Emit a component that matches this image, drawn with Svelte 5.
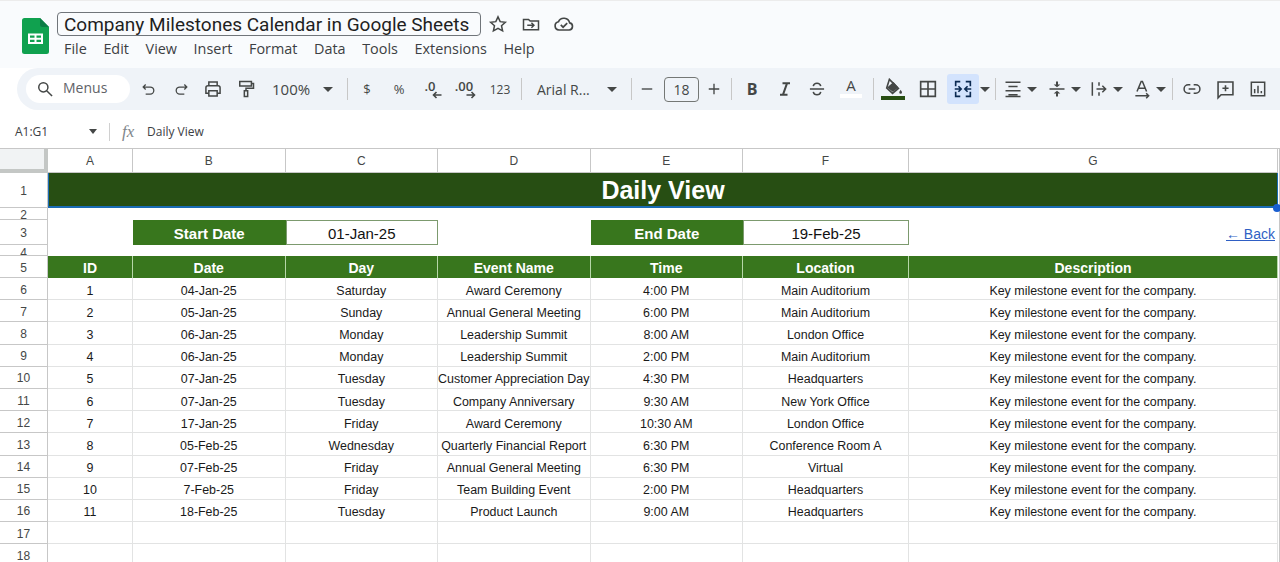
<script>
  const cols = ["A", "B", "C", "D", "E", "F", "G"];
  const menus = ["File", "Edit", "View", "Insert", "Format", "Data", "Tools", "Extensions", "Help"];
  const heads = ["ID", "Date", "Day", "Event Name", "Time", "Location", "Description"];
  const desc = "Key milestone event for the company.";

  const events = [
    [1, "04-Jan-25", "Saturday", "Award Ceremony", "4:00 PM", "Main Auditorium"],
    [2, "05-Jan-25", "Sunday", "Annual General Meeting", "6:00 PM", "Main Auditorium"],
    [3, "06-Jan-25", "Monday", "Leadership Summit", "8:00 AM", "London Office"],
    [4, "06-Jan-25", "Monday", "Leadership Summit", "2:00 PM", "Main Auditorium"],
    [5, "07-Jan-25", "Tuesday", "Customer Appreciation Day", "4:30 PM", "Headquarters"],
    [6, "07-Jan-25", "Tuesday", "Company Anniversary", "9:30 AM", "New York Office"],
    [7, "17-Jan-25", "Friday", "Award Ceremony", "10:30 AM", "London Office"],
    [8, "05-Feb-25", "Wednesday", "Quarterly Financial Report", "6:30 PM", "Conference Room A"],
    [9, "07-Feb-25", "Friday", "Annual General Meeting", "6:30 PM", "Virtual"],
    [10, "7-Feb-25", "Friday", "Team Building Event", "2:00 PM", "Headquarters"],
    [11, "18-Feb-25", "Tuesday", "Product Launch", "9:00 AM", "Headquarters"]
  ];
</script>

<div class="app">
  <header class="top">
    <svg class="logo" viewBox="0 0 27 36" width="27" height="36">
      <path d="M2.5 0H18l9 9v24.5a2.5 2.5 0 0 1-2.5 2.5h-22A2.5 2.5 0 0 1 0 33.500V2.500A2.500 2.500 0 0 1 2.500 0z" fill="#10a14f" />
      <path d="M18 0l9 9h-6.500A2.500 2.500 0 0 1 18 6.500z" fill="#0b7d45" />
      <path d="M6 15.500h15v10.500H6zM8 17.500v2.300h4.500v-2.300zM14.500 17.500v2.300H19v-2.300zM8 21.700V24h4.500v-2.300zM14.500 21.700V24H19v-2.300z" fill="#fff" fill-rule="evenodd" />
    </svg>
    <div class="titles">
      <div class="title-row">
        <div class="doc-title">Company Milestones Calendar in Google Sheets</div>
        <svg class="star" viewBox="0 0 24 24" width="20" height="20"><path d="M12 3.500l2.600 5.700 6.200.7-4.600 4.200 1.300 6.100L12 17.100l-5.500 3.100 1.300-6.100-4.600-4.200 6.200-.7z" /></svg>
        <svg class="move" viewBox="0 0 24 24" width="20" height="20"><path d="M3 6.500h6l2 2h10v10.500H3zM7.500 13.500h8M12.500 10.500l3 3-3 3" /></svg>
        <svg class="cloud" viewBox="0 0 24 24" width="22" height="22"><path d="M6.500 18.500a4.500 4.500 0 0 1-.6-8.900 6.500 6.500 0 0 1 12.300 1.200 3.900 3.900 0 0 1-.6 7.700zM8.500 13l2.500 2.500 4.500-4.500" /></svg>
      </div>
      <nav class="menus">
        {#each menus as m}<span>{m}</span>{/each}
      </nav>
    </div>
  </header>

  <div class="toolbar">
    <div class="pill">
      <svg viewBox="0 0 24 24" width="20" height="20"><circle cx="10" cy="10" r="5.500" /><path d="M14 14l6.500 6.500" /></svg>
      <span>Menus</span>
    </div>
    <div class="tool w33"><svg viewBox="0 0 24 24" width="17" height="17"><path d="M8 5L4.500 8.500 8 12M5 8.500h9.500a5 5 0 0 1 0 10H8" /></svg></div>
    <div class="tool w32"><svg viewBox="0 0 24 24" width="17" height="17"><path d="M16 5l3.500 3.500L16 12M19 8.500H9.500a5 5 0 0 0 0 10H16" /></svg></div>
    <div class="tool w32"><svg viewBox="0 0 24 24" width="20" height="20"><path d="M7 8V3.500h10V8M7 17H3.500v-6.500A2.500 2.500 0 0 1 6 8h12a2.500 2.500 0 0 1 2.500 2.500V17H17M7 14h10v6.500H7z" /></svg></div>
    <div class="tool w33"><svg viewBox="0 0 24 24" width="20" height="20"><path d="M4.500 3h14v5.500h-14zM18.500 5.500h2.500v5.500h-9v3M10 14h4v7h-4z" /></svg></div>
    <div class="tool w79 between"><span class="label big">100%</span><i class="caret"></i></div>
    <div class="sep ml6"></div>
    <div class="tool w38"><span class="label plain">$</span></div>
    <div class="tool w26"><span class="label plain">%</span></div>
    <div class="tool w40 dec">
      <span class="dec-num">.0</span>
      <svg class="dec-arrow" viewBox="0 0 10 8" width="10" height="8"><path d="M9.500 4H1.500M4.500 1L1.500 4l3 3" /></svg>
    </div>
    <div class="tool w28 dec">
      <span class="dec-num">.00</span>
      <svg class="dec-arrow" viewBox="0 0 10 8" width="10" height="8"><path d="M.5 4h8M5.500 1l3 3-3 3" /></svg>
    </div>
    <div class="tool w40"><span class="label small">123</span></div>
    <div class="sep ml1"></div>
    <div class="tool w100 between font"><span class="label">Arial R...</span><i class="caret"></i></div>
    <div class="sep ml9"></div>
    <div class="tool w30"><svg viewBox="0 0 24 24" width="18" height="18"><path d="M5 12h14" /></svg></div>
    <div class="size">18</div>
    <div class="tool w30"><svg viewBox="0 0 24 24" width="18" height="18"><path d="M5 12h14M12 5v14" /></svg></div>
    <div class="sep ml2"></div>
    <div class="tool w40"><span class="glyph b">B</span></div>
    <div class="tool w26">
      <svg viewBox="0 0 24 24" width="20" height="20"><path class="thick" d="M9 5h9M6 19h9M14.500 5L9.500 19" /></svg>
    </div>
    <div class="tool w38">
      <svg viewBox="0 0 24 24" width="20" height="20"><path d="M3.500 12h17M16.500 8.500C16 6 14.500 5 12 5S8 6 7.500 8.500M7.500 15.500C8 18 9.500 19 12 19s4-1 4.500-3.500" /></svg>
    </div>
    <div class="tool w30 color">
      <span class="glyph a">A</span>
      <i class="swatch white"></i>
    </div>
    <div class="sep ml7"></div>
    <div class="tool w38 color">
      <svg viewBox="0 0 24 20" width="22" height="18"><path class="filled" d="M5.500 10.500L12.500 4.500l5.500 6-6 5z" /><path d="M8 1.500l10 10-6.500 5.500L5 11z" /><path class="filled" d="M20.500 13c1 1.500 1.500 2.200 1.500 3a1.500 1.500 0 0 1-3 0c0-.8.500-1.500 1.500-3z" /></svg>
      <i class="swatch dark"></i>
    </div>
    <div class="tool w32"><svg viewBox="0 0 24 24" width="22" height="22"><path d="M4 4h16v16H4zM12 4v16M4 12h16" /></svg></div>
    <div class="tool merge">
      <svg viewBox="0 0 24 24" width="22" height="22"><path class="navy" d="M9 4H4v5M4 15v5h5M15 4h5v5M20 15v5h-5M3 12h6.500M7 9l3 3-3 3M21 12h-6.500M17 9l-3 3 3 3" /></svg>
    </div>
    <div class="tool w12"><i class="caret"></i></div>
    <div class="sep ml4"></div>
    <div class="tool w44 with-caret">
      <svg viewBox="0 0 24 24" width="20" height="20"><path d="M3 4h18M6.500 9h11M3 14h18M6.500 19h11M3 21h18" /></svg>
      <i class="caret"></i>
    </div>
    <div class="tool w43 with-caret">
      <svg viewBox="0 0 24 24" width="20" height="20"><path d="M3 12h18" /><path class="filled" d="M10.800 3h2.400v3.500H16L12 10 8 6.500h2.800zM10.800 21h2.400v-3.500H16L12 14l-4 3.500h2.800z" /></svg>
      <i class="caret"></i>
    </div>
    <div class="tool w42 with-caret">
      <svg viewBox="0 0 24 24" width="20" height="20"><path d="M4 4v16M9 12h11M16 8l4 4-4 4M12 4v4M12 16v4" /></svg>
      <i class="caret"></i>
    </div>
    <div class="tool w43 with-caret">
      <svg viewBox="0 0 24 24" width="20" height="20"><path d="M6 15L11 3h1.500l5 12M7.500 11h8.500M4 20h15M17 17l3 3-3 3" /></svg>
      <i class="caret"></i>
    </div>
    <div class="sep ml4"></div>
    <div class="tool w38">
      <svg viewBox="0 0 24 24" width="20" height="20"><path d="M10 7H7.500a5 5 0 0 0 0 10H10M14 7h2.500a5 5 0 0 1 0 10H14M8 12h8" /></svg>
    </div>
    <div class="tool w29">
      <svg viewBox="0 0 24 24" width="21" height="21"><path d="M3.500 3.500h17v14.500H7l-3.500 3.500zM12 7v7M8.500 10.500h7" /></svg>
    </div>
    <div class="tool w36">
      <svg viewBox="0 0 24 24" width="20" height="20"><path d="M4 4h16v16H4zM8 17v-5M12 17V8M16 17v-2.500" /></svg>
    </div>
  </div>

  <div class="formula">
    <span class="ref">A1:G1</span>
    <i class="caret"></i>
    <span class="fsep"></span>
    <span class="fx">fx</span>
    <span class="fval">Daily View</span>
  </div>

  <div class="sheet">
    <div class="corner"></div>
    {#each cols as c}<div class="col-head">{c}</div>{/each}

    <div class="row-head">1</div>
    <div class="banner">Daily View<i class="handle"></i></div>

    <div class="row-head">2</div>
    <div class="blank wide"></div>

    <div class="row-head">3</div>
    <div class="blank"></div>
    <div class="date-label">Start Date</div>
    <div class="date-value">01-Jan-25</div>
    <div class="blank"></div>
    <div class="date-label">End Date</div>
    <div class="date-value">19-Feb-25</div>
    <div class="back"><span>← Back</span></div>

    <div class="row-head r4"><span>4</span></div>
    <div class="blank wide"></div>

    <div class="row-head">5</div>
    {#each heads as h}<div class="th">{h}</div>{/each}

    {#each events as ev, i}
      <div class="row-head">{i + 6}</div>
      {#each ev as v}<div class="td">{v}</div>{/each}
      <div class="td">{desc}</div>
    {/each}

    {#each [17, 18] as n}
      <div class="row-head">{n}</div>
      {#each cols as c}<div class="td"></div>{/each}
    {/each}
  </div>
</div>

<style>
  :global(body) {
    margin: 0;
    background: #fff;
    overflow: hidden;
  }
  .app {
    width: 1280px;
    height: 562px;
    overflow: hidden;
    font-family: "Liberation Sans", Arial, sans-serif;
    color: #1f1f1f;
  }

  /* title area */
  .top {
    display: flex;
    height: 68px;
    box-sizing: border-box;
    padding: 17px 0 0 22px;
    background: #f9fbfd;
    border-top: 1px solid #ececec;
  }
  .logo {
    flex: none;
  }
  .titles {
    margin: -6px 0 0 8px;
    font-family: "Open Sans", sans-serif;
  }
  .title-row {
    display: flex;
    align-items: center;
    height: 24px;
  }
  .doc-title {
    box-sizing: border-box;
    width: 424px;
    height: 24px;
    padding-left: 6px;
    border: 1px solid #70757a;
    border-radius: 4px;
    font-family: Roboto, sans-serif;
    font-size: 19px;
    line-height: 23px;
    white-space: nowrap;
  }
  .title-row svg {
    fill: none;
    stroke: #444746;
    stroke-width: 1.8;
  }
  .star {
    margin-left: 7px;
  }
  .move {
    margin-left: 13px;
  }
  .cloud {
    margin-left: 12px;
  }
  .menus {
    display: flex;
    gap: 16.600px;
    margin: 4px 0 0 7px;
    font-size: 14.400px;
    line-height: 18px;
    color: #3c4043;
  }

  /* toolbar */
  .toolbar {
    display: flex;
    align-items: center;
    height: 42px;
    margin-left: 17px;
    padding-left: 9px;
    background: #eff3f8;
    border-radius: 21px 0 0 21px;
  }
  .toolbar svg {
    fill: none;
    stroke: #444746;
    stroke-width: 1.8;
  }
  .toolbar .filled {
    fill: #444746;
    stroke: none;
  }
  .pill {
    flex: none;
    display: flex;
    align-items: center;
    box-sizing: border-box;
    width: 104px;
    height: 28px;
    margin-right: 2px;
    padding-left: 9px;
    background: #fff;
    border-radius: 14px;
    font-family: "Open Sans", sans-serif;
    font-size: 14px;
    line-height: 18px;
    color: #5f6368;
  }
  .pill span {
    margin: -2px 0 0 8px;
  }
  .tool {
    flex: none;
    position: relative;
    display: flex;
    align-items: center;
    justify-content: center;
    height: 30px;
    color: #444746;
    font-family: "Open Sans", sans-serif;
    font-size: 14px;
  }
  .w12 { width: 12px; }
  .w26 { width: 26px; }
  .w28 { width: 28px; }
  .w29 { width: 29px; }
  .w30 { width: 30px; }
  .w32 { width: 32px; }
  .w33 { width: 33px; }
  .w36 { width: 36px; }
  .w38 { width: 38px; }
  .w40 { width: 40px; }
  .w42 { width: 42px; }
  .w43 { width: 43px; }
  .w44 { width: 44px; }
  .w79 { width: 79px; }
  .w100 { width: 100px; }
  .between {
    justify-content: space-between;
    box-sizing: border-box;
    padding: 0 8px 0 10px;
  }
  .font {
    padding: 0 5px 0 15px;
  }
  .with-caret {
    box-sizing: border-box;
    padding-left: 4px;
    gap: 4px;
  }
  .label.big {
    font-size: 15px;
  }
  .label.small {
    font-size: 12px;
  }
  .label.plain {
    font-size: 13px;
  }
  .caret {
    display: inline-block;
    width: 0;
    height: 0;
    border-left: 5px solid transparent;
    border-right: 5px solid transparent;
    border-top: 5px solid #444746;
  }
  .sep {
    flex: none;
    width: 1px;
    height: 22px;
    background: #c7c7c7;
  }
  .ml1 { margin-left: 1px; }
  .ml2 { margin-left: 2px; }
  .ml4 { margin-left: 4px; }
  .ml6 { margin-left: 6px; }
  .ml7 { margin-left: 7px; }
  .ml9 { margin-left: 9px; }
  .dec {
    flex-direction: column;
    font-weight: 600;
  }
  .dec-num {
    font-size: 13px;
    line-height: 13px;
    margin: 0 4px 0 0;
  }
  .toolbar .dec-arrow {
    margin: -2px 0 0 10px;
    stroke-width: 1.6;
  }
  .size {
    flex: none;
    box-sizing: border-box;
    width: 35px;
    height: 25px;
    margin: 0 0 0 2px;
    border: 1px solid #747775;
    border-radius: 4px;
    text-align: center;
    font-family: "Open Sans", sans-serif;
    font-size: 14px;
    line-height: 23px;
    color: #444746;
  }
  .glyph.b {
    font-family: "Open Sans", sans-serif;
    font-size: 16px;
    font-weight: 700;
  }
  .toolbar .thick {
    stroke-width: 2.400;
  }
  .color {
    flex-direction: column;
  }
  .glyph.a {
    font-size: 15px;
    line-height: 15px;
    font-family: "Open Sans", sans-serif;
    margin-top: -2px;
  }
  .swatch {
    display: block;
    height: 4px;
    margin-top: 1px;
  }
  .swatch.white {
    width: 22px;
    background: #fff;
  }
  .swatch.dark {
    width: 24px;
    background: #274e13;
    margin-top: 0;
  }
  .merge {
    width: 32px;
    margin-left: 3px;
    background: #d3e3fd;
    border-radius: 3px;
  }
  .toolbar .navy {
    stroke: #0b2a52;
  }

  /* name box and formula bar */
  .formula {
    display: flex;
    align-items: center;
    height: 30px;
    margin-top: 8px;
    padding: 0 0 3px 15px;
    box-sizing: border-box;
    background: #fff;
    font-size: 12px;
    color: #3c4043;
    font-family: "Open Sans", sans-serif;
  }
  .ref {
    width: 74px;
  }
  .formula .caret {
    border-left-width: 4.500px;
    border-right-width: 4.500px;
  }
  .fsep {
    width: 1px;
    height: 18px;
    margin-left: 12px;
    background: #d0d0d0;
  }
  .fx {
    margin-left: 12px;
    width: 25px;
    font-family: "Liberation Serif", serif;
    font-style: italic;
    font-size: 17px;
    color: #80868b;
  }

  /* grid */
  .sheet {
    display: grid;
    grid-template-columns: 48px 85px repeat(4, 152.5px) 166px 369px;
    grid-template-rows: 24px 35px 12px 25px 11px 22px repeat(13, 22.2px);
    width: 1279px;
    border-top: 1px solid #c7c7c7;
    border-right: 1px solid #c7c7c7;
    font-size: 12px;
  }
  .corner {
    background: #f1f3f4;
    border-right: 4px solid #c4c7c5;
    border-bottom: 4px solid #c4c7c5;
    box-sizing: border-box;
  }
  .col-head {
    display: flex;
    align-items: center;
    justify-content: center;
    border-right: 1px solid #c7c7c7;
    border-bottom: 1px solid #c7c7c7;
    color: #444746;
    font-size: 12px;
  }
  .row-head {
    display: flex;
    align-items: center;
    justify-content: center;
    overflow: hidden;
    border-bottom: 1px solid #c7c7c7;
    border-right: 1px solid #c7c7c7;
    color: #444746;
    font-size: 12px;
    line-height: 12px;
    padding-top: 2px;
    box-sizing: border-box;
  }
  .r4 span {
    margin-top: 4px;
  }
  .banner {
    grid-column: 2 / -1;
    position: relative;
    display: flex;
    align-items: center;
    justify-content: center;
    padding-top: 2px;
    box-sizing: border-box;
    background: #274e13;
    border: solid #1a6bb5;
    border-width: 0 1px 2px 1px;
    color: #fff;
    font-size: 25px;
    font-weight: 700;
  }
  .handle {
    position: absolute;
    right: -4px;
    bottom: -6px;
    width: 8px;
    height: 8px;
    border-radius: 50%;
    background: #1a5fd0;
  }
  .blank.wide {
    grid-column: 2 / -1;
  }
  .date-label {
    display: flex;
    align-items: center;
    justify-content: center;
    padding-top: 1px;
    background: #38761d;
    color: #fff;
    font-size: 15px;
    font-weight: 700;
  }
  .date-value {
    display: flex;
    align-items: center;
    justify-content: center;
    padding-top: 1px;
    border: 1px solid #7c9a6e;
    font-size: 15px;
    color: #111;
  }
  .back {
    display: flex;
    align-items: center;
    justify-content: flex-end;
    padding: 3px 3px 0 0;
    font-size: 14px;
    color: #2f5fc4;
    text-decoration: underline;
  }
  .th {
    display: flex;
    align-items: center;
    justify-content: center;
    padding-top: 2px;
    background: #38761d;
    border-right: 1px solid #b6d7a8;
    color: #fff;
    font-size: 14px;
    font-weight: 700;
  }
  .td {
    display: flex;
    align-items: center;
    justify-content: center;
    box-sizing: border-box;
    padding-top: 4px;
    white-space: nowrap;
    border-right: 1px solid #e2e3e3;
    border-bottom: 1px solid #e2e3e3;
    color: #1a1a1a;
    font-size: 12.450px;
  }
</style>
